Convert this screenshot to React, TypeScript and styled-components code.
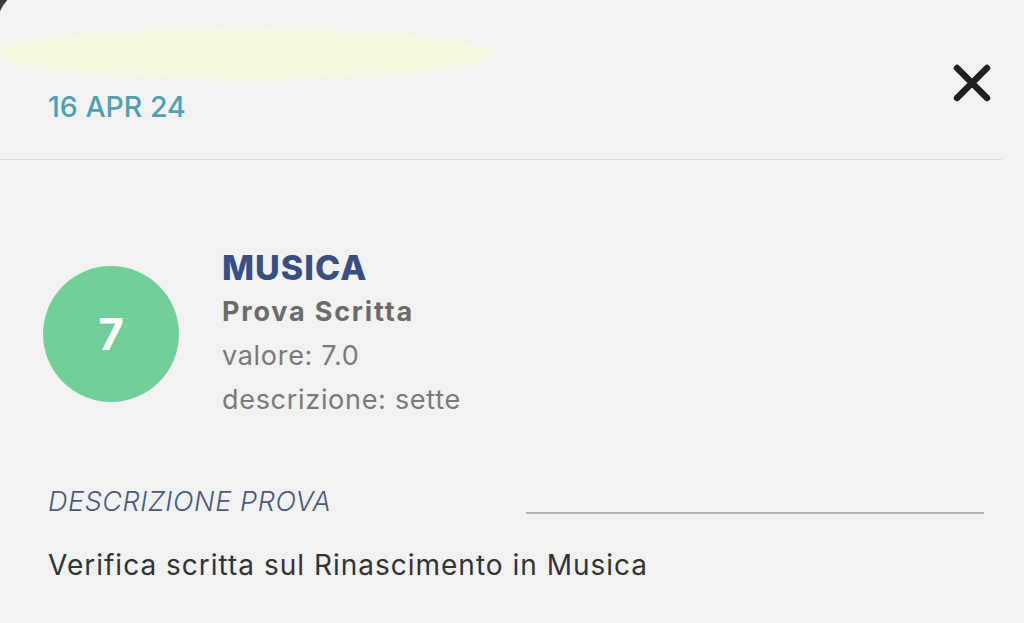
import React from "react";
import styled, { createGlobalStyle } from "styled-components";

const GlobalStyle = createGlobalStyle`
  html, body {
    margin: 0;
    padding: 0;
    background: #3a3a3a;
    overflow: hidden;
  }
  body {
    font-family: "Inter", "Noto Sans", sans-serif;
  }
`;

const Sheet = styled.div`
  margin: -12px 0 0 -3px;
  min-height: 640px;
  background: #f2f2f2;
  border-top-left-radius: 38px;
`;

const Header = styled.header`
  display: grid;
  grid-template-columns: 1fr auto;
  height: 172px;
  margin-right: 22px;
  border-bottom: 1px solid #dcdcdc;
  box-sizing: border-box;
`;

const HeaderLeft = styled.div`
  padding-top: 41px;
`;

const Redaction = styled.div`
  width: 495px;
  height: 50px;
  background: #f6f8dc;
  border-radius: 50%;
  filter: blur(3px);
`;

const DateLabel = styled.div`
  margin: 12px 0 0 51px;
  font-size: 28.5px;
  line-height: 32px;
  font-weight: 500;
  color: #519fb3;
`;

const CloseButton = styled.button`
  margin: 75px 10px 0 0;
  padding: 0;
  width: 40px;
  height: 40px;
  border: none;
  background: none;
  align-self: start;
`;

const GradeRow = styled.section`
  display: flex;
  align-items: center;
  gap: 43px;
  margin-top: 86px;
  padding-left: 46px;
`;

const GradeCircle = styled.div`
  width: 136px;
  height: 136px;
  border-radius: 50%;
  background: #73cf99;
  display: flex;
  align-items: center;
  justify-content: center;
  color: #fff;
  font-size: 44px;
  font-weight: 700;
`;

const GradeInfo = styled.div`
  display: flex;
  flex-direction: column;
`;

const Subject = styled.div`
  font-size: 34px;
  line-height: 44px;
  font-weight: 800;
  letter-spacing: 1px;
  color: #3a4f7f;
`;

const InfoLine = styled.div<{ $bold?: boolean }>`
  font-size: 27px;
  line-height: 44px;
  font-weight: ${(p) => (p.$bold ? 700 : 400)};
  letter-spacing: ${(p) => (p.$bold ? "1.8px" : "0.7px")};
  color: ${(p) => (p.$bold ? "#6b6b6b" : "#7a7a7a")};
`;

const DescSection = styled.section`
  margin-top: 62px;
  padding: 0 40px 0 51px;
`;

const DescHeading = styled.div`
  display: flex;
  align-items: flex-end;
`;

const DescTitle = styled.div`
  font-size: 27px;
  line-height: 36px;
  font-style: italic;
  font-weight: 300;
  letter-spacing: 0.6px;
  color: #4a5a80;
`;

const DescRule = styled.div`
  width: 458px;
  height: 2px;
  margin: 0 0 6px auto;
  background: #b4b4b4;
`;

const DescText = styled.p`
  margin: 27px 0 0;
  font-size: 28px;
  line-height: 36px;
  letter-spacing: 1px;
  color: #333;
`;

const App = () => {
  return (
    <>
      <GlobalStyle />
      <Sheet>
        <Header>
          <HeaderLeft>
            <Redaction />
            <DateLabel>16 APR 24</DateLabel>
          </HeaderLeft>
          <CloseButton aria-label="Chiudi">
            <svg width="40" height="40" viewBox="0 0 40 40">
              <path
                d="M5 5 L35 35 M35 5 L5 35"
                stroke="#1f1f1f"
                strokeWidth="6.5"
                strokeLinecap="round"
              />
            </svg>
          </CloseButton>
        </Header>
        <GradeRow>
          <GradeCircle>7</GradeCircle>
          <GradeInfo>
            <Subject>MUSICA</Subject>
            <InfoLine $bold>Prova Scritta</InfoLine>
            <InfoLine>valore: 7.0</InfoLine>
            <InfoLine>descrizione: sette</InfoLine>
          </GradeInfo>
        </GradeRow>
        <DescSection>
          <DescHeading>
            <DescTitle>DESCRIZIONE PROVA</DescTitle>
            <DescRule />
          </DescHeading>
          <DescText>Verifica scritta sul Rinascimento in Musica</DescText>
        </DescSection>
      </Sheet>
    </>
  );
};

export default App;
